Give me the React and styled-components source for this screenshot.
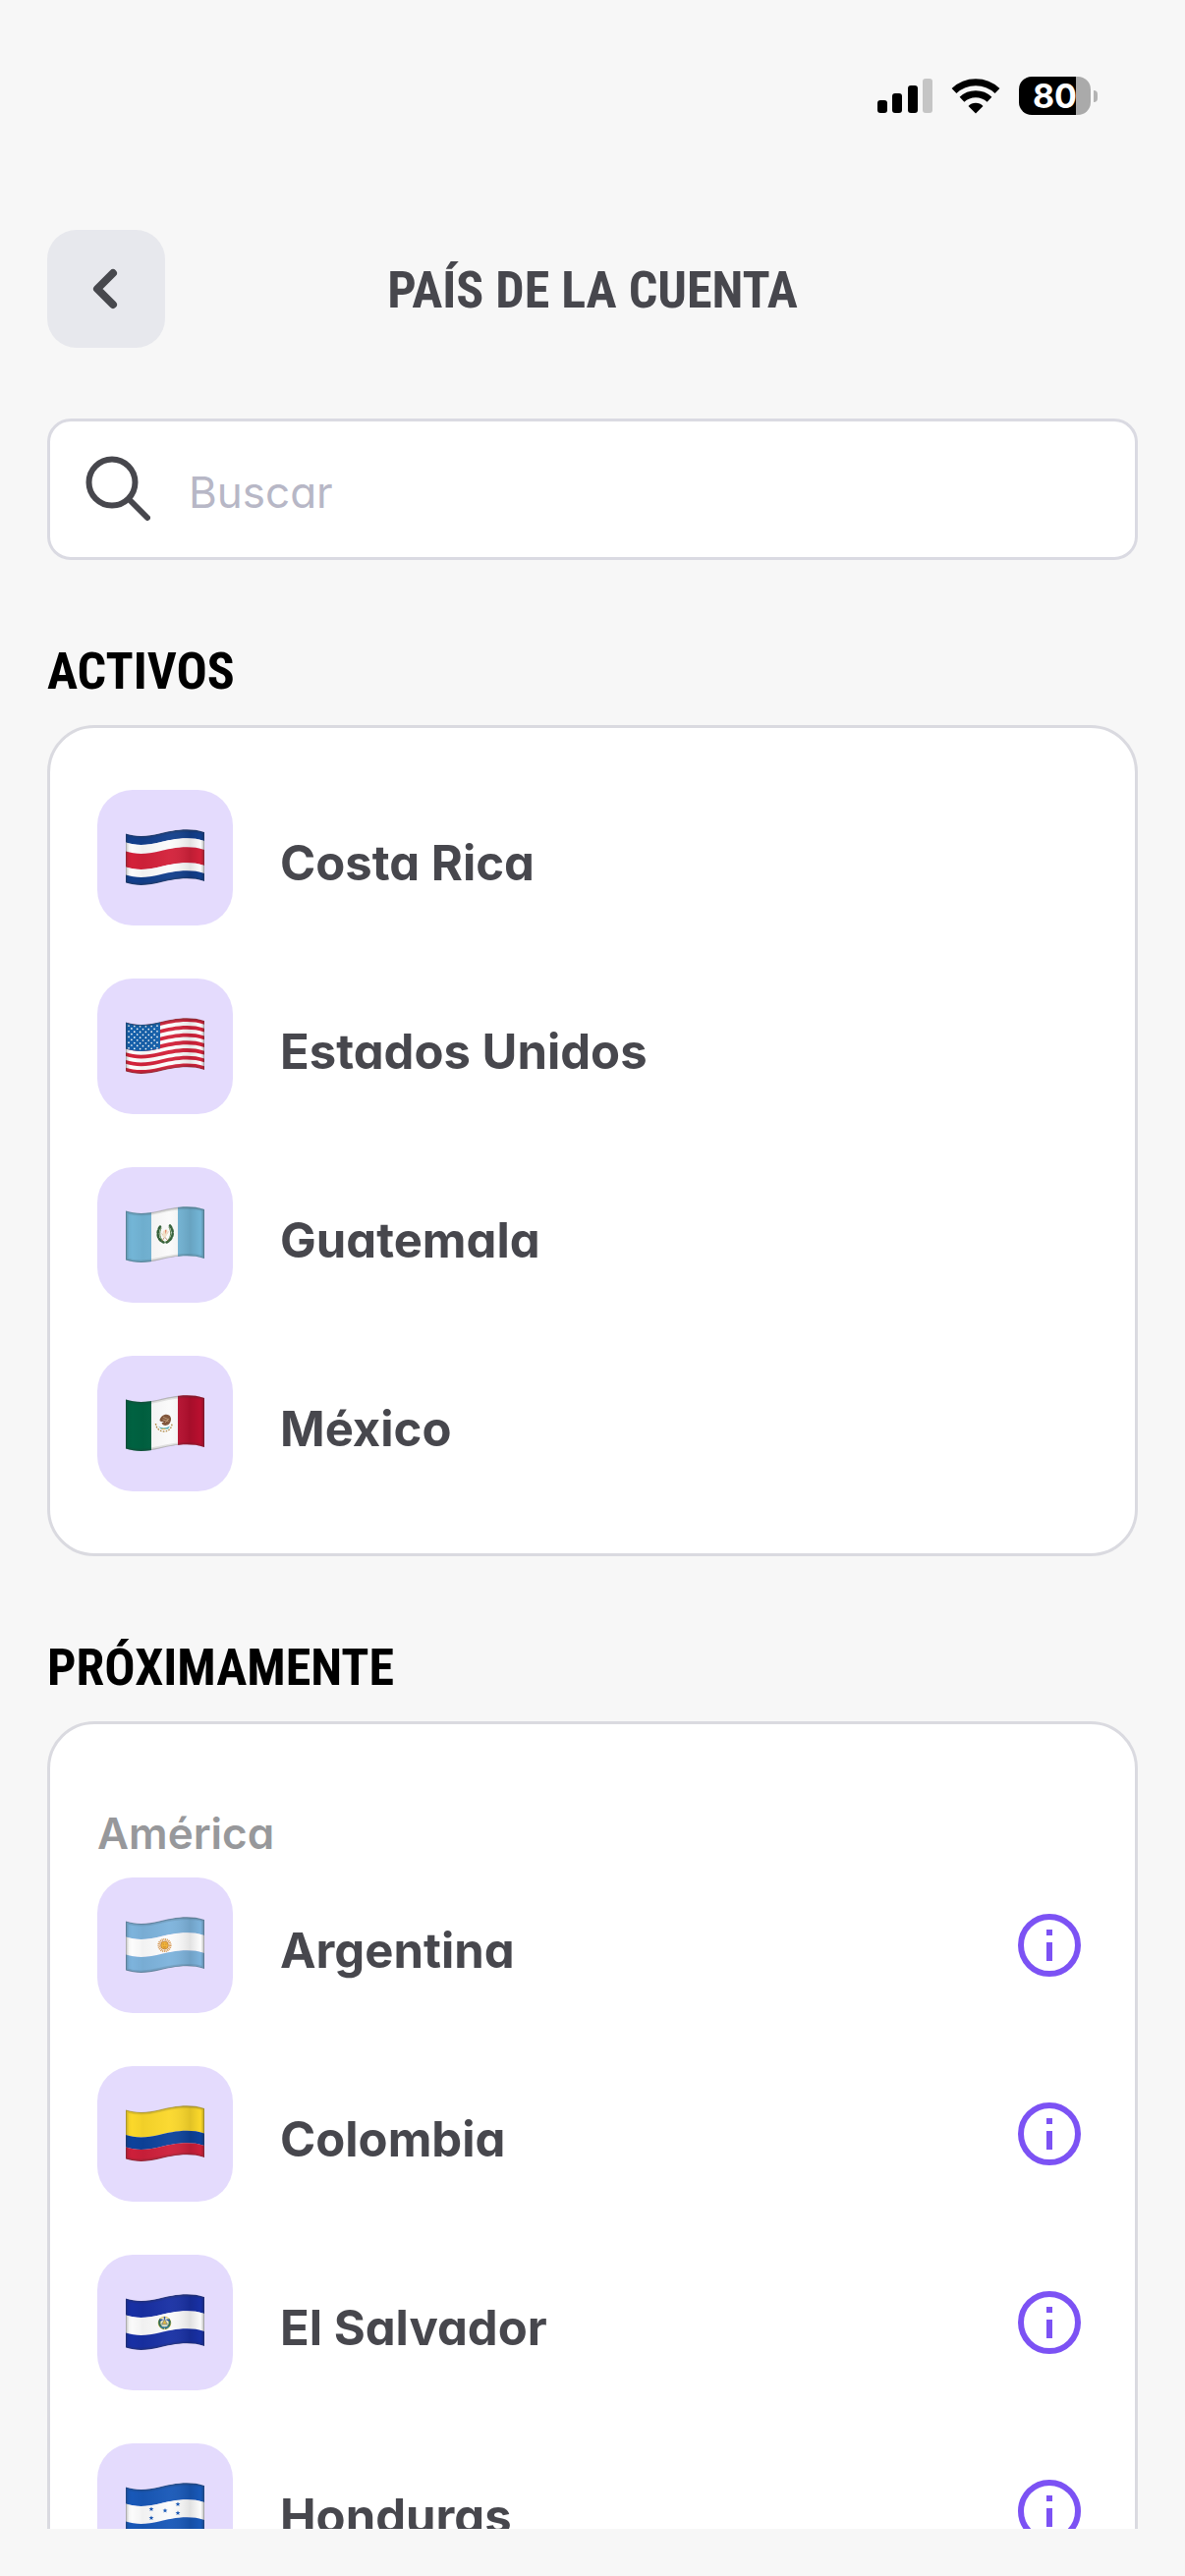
import React, { useId } from "react";
import styled, { createGlobalStyle } from "styled-components";

const GlobalStyle = createGlobalStyle`
  *, *::before, *::after { box-sizing: border-box; }
  body {
    margin: 0;
    background: #f7f7f7;
    color: #47474d;
    font-family: Inter, "Liberation Sans", sans-serif;
    font-feature-settings: "cv11" 1;
  }
  h1, h2, h3, ul { margin: 0; padding: 0; }
`;

const HEADING_FONT = `"Roboto Condensed", "Open Sans Condensed", "Noto Sans ExtraCondensed", "Noto Sans Condensed", Roboto, sans-serif`;

const Screen = styled.div`
  height: 100vh;
  display: flex;
  flex-direction: column;
  padding-bottom: 48px;
`;

const StatusBar = styled.div`
  display: flex;
  align-items: center;
  justify-content: flex-end;
  gap: 19px;
  padding: 78px 89px 0 48px;
`;

const BatteryWrap = styled.div`
  display: flex;
  align-items: center;
  gap: 3px;
`;

const Battery = styled.div`
  width: 73px;
  height: 39px;
  border-radius: 13px;
  background: linear-gradient(to right, #000 80%, #aaaaaa 80%);
  color: #fff;
  font-size: 34px;
  font-weight: 700;
  line-height: 39px;
  text-align: center;
`;

const BatteryTip = styled.div`
  width: 4px;
  height: 12px;
  border-radius: 0 6px 6px 0;
  background: #b4b4b4;
`;

const Header = styled.header`
  display: grid;
  grid-template-columns: 120px 1fr 120px;
  align-items: center;
  padding: 117px 48px 0;
`;

const BackButton = styled.button`
  display: flex;
  align-items: center;
  justify-content: center;
  width: 120px;
  height: 120px;
  padding: 0;
  border: 0;
  border-radius: 30px;
  background: #e7e8ed;
  color: #47484d;
`;

const Title = styled.h1`
  padding-top: 4px;
  font-family: ${HEADING_FONT};
  font-size: 52px;
  font-weight: 700;
  line-height: 60px;
  text-align: center;
`;

const SearchBox = styled.label`
  display: flex;
  align-items: center;
  gap: 39px;
  height: 144px;
  flex-shrink: 0;
  margin: 72px 48px 0;
  padding: 0 36px;
  border: 3px solid #dadae2;
  border-radius: 24px;
  background: #fff;
  color: #47474d;
`;

const SearchInput = styled.input`
  flex: 1;
  min-width: 0;
  padding: 6px 0 0;
  border: 0;
  outline: 0;
  background: transparent;
  color: inherit;
  font: inherit;
  font-feature-settings: inherit;
  font-size: 44px;
  line-height: 52px;
  &::placeholder { color: #b7b7c6; opacity: 1; }
`;

const Results = styled.main`
  flex: 1;
  min-height: 0;
  overflow-y: auto;
  padding: 0 48px;
  scrollbar-width: none;
`;

const SectionTitle = styled.h2`
  padding: 84px 0 24px;
  color: #000;
  font-family: ${HEADING_FONT};
  font-size: 52px;
  font-weight: 700;
  line-height: 60px;
`;

const Card = styled.div`
  padding: 63px 48px;
  border: 3px solid #dadae0;
  border-radius: 48px;
  background: #fff;
`;

const Region = styled.h3`
  padding: 22px 0 19px;
  color: #97989b;
  font-size: 44px;
  font-weight: 600;
  line-height: 52px;
`;

const CountryList = styled.ul`
  display: flex;
  flex-direction: column;
  gap: 54px;
  list-style: none;
`;

const CountryRow = styled.li`
  display: flex;
  align-items: center;
`;

const CountryButton = styled.button`
  flex: 1;
  display: flex;
  align-items: center;
  gap: 48px;
  padding: 0;
  border: 0;
  background: none;
  color: inherit;
  font: inherit;
  font-feature-settings: inherit;
  text-align: left;
`;

const Tile = styled.span`
  display: flex;
  align-items: center;
  justify-content: center;
  width: 138px;
  height: 138px;
  border-radius: 36px;
  background: #e4dbfd;
`;

const CountryName = styled.span`
  padding-top: 12px;
  font-size: 49px;
  font-weight: 700;
  line-height: 60px;
`;

const InfoButton = styled.button`
  display: flex;
  margin-right: 7px;
  padding: 0;
  border: 0;
  background: none;
  color: #7c52f4;
`;

/* The cloth of every flag follows one wave, 80 wide and 50 tall. */
const band = (top, bottom) =>
  `M0 ${4.5 + top}C10 ${8 + top} 22 ${7.5 + top} 34 ${4.5 + top}S64 ${-2.5 + top} 80 ${3 + top}` +
  `V${3 + bottom}C64 ${-2.5 + bottom} 46 ${1.5 + bottom} 34 ${4.5 + bottom}S10 ${8 + bottom} 0 ${4.5 + bottom}Z`;

const Stripes = ({ bands }) =>
  bands.map(([fill, top, bottom]) => <path key={top} d={band(top, bottom)} fill={fill} />);

const Columns = ({ left, right }) => (
  <>
    <path d={band(0, 50)} fill="#fafafa" />
    <rect x="0" y="0" width="26" height="60" fill={left} />
    <rect x="53" y="0" width="27" height="60" fill={right} />
  </>
);

const star = (cx, cy, r) =>
  Array.from({ length: 10 }, (_, i) => {
    const a = (Math.PI / 5) * i - Math.PI / 2;
    const d = i % 2 ? r * 0.42 : r;
    return `${cx + d * Math.cos(a)},${cy + d * Math.sin(a)}`;
  }).join(" ");

const flags = {
  cr: (
    <Stripes
      bands={[
        ["#123f8c", 0, 9],
        ["#fbfbfb", 9, 18],
        ["#d3213a", 18, 34],
        ["#fbfbfb", 34, 42],
        ["#123f8c", 42, 50],
      ]}
    />
  ),
  us: (
    <>
      <path d={band(0, 50)} fill="#fdfdfd" />
      {[0, 2, 4, 6, 8, 10, 12].map((i) => (
        <path key={i} d={band((i * 50) / 13, ((i + 1) * 50) / 13)} fill="#d3223a" />
      ))}
      <path d="M0 4.500C10 8 22 7.500 35 4.300V31.300C22 34.500 10 35 0 31.500Z" fill="#1560ab" />
      {Array.from({ length: 9 }, (_, r) =>
        Array.from({ length: r % 2 ? 5 : 6 }, (_, c) => (
          <circle
            key={`${r}-${c}`}
            cx={3 + c * 5.8 + (r % 2 ? 2.9 : 0)}
            cy={7.5 + r * 2.85 + Math.sin(((c + 1) * Math.PI) / 7) * 1.3}
            r="0.85"
            fill="#fff"
          />
        ))
      )}
    </>
  ),
  gt: (
    <>
      <Columns left="#73b5d6" right="#73b5d6" />
      <g fill="none" strokeLinecap="round">
        <path d="M35 20.500C31 26 32 34 38.500 36.500" stroke="#2f5d35" strokeWidth="2.600" strokeDasharray="2.400 2" />
        <path d="M45 19.500C49.500 25 48.500 33 41.500 36.500" stroke="#2f5d35" strokeWidth="2.600" strokeDasharray="2.400 2" />
        <path d="M36 22C33.500 27 34.500 33 39 36M44 21C47 26 46 33 41 36" stroke="#4f7a42" strokeWidth="1" />
        <path d="M37 35L43 26M43 35L37 28" stroke="#a97b50" strokeWidth="0.800" />
      </g>
      <path d="M38 25l4-2 1 4-3 5-3-2z" fill="#f2e2c9" />
      <path d="M40 23.500l1.500 1-1 4z" fill="#e3785b" />
    </>
  ),
  mx: (
    <>
      <Columns left="#006241" right="#b90f2f" />
      <path d="M34.500 26C35 21.500 40 18.500 44 20.500C47 22.500 46.500 27 44 29.500C41 32 37.500 31 36.500 28.500L39 27L36 27Z" fill="#7d5136" />
      <path d="M38 22.500l5 2M37.500 25l6 1.500M40 28l4-4" stroke="#c7a27e" strokeWidth="0.800" fill="none" />
      <path d="M33 31.500c3 2.500 8 2.500 12 0l-2 3h-7z" fill="#48a9b5" />
      <path d="M30.500 29c.5 5 4 8 8.500 8s7.500-3 8-7.500" stroke="#b08a45" strokeWidth="1.400" strokeDasharray="1.600 1.300" fill="none" />
      <path d="M36.500 34.500h4" stroke="#d4b04e" strokeWidth="1.200" />
    </>
  ),
  ar: (
    <>
      <Stripes bands={[["#7db3dc", 0, 16], ["#fcfcfc", 16, 34], ["#7db3dc", 34, 50]]} />
      <circle cx="39.500" cy="29" r="5.800" fill="none" stroke="#d99a55" strokeWidth="2.600" strokeDasharray="1 0.700" />
      <circle cx="39.500" cy="29" r="3.900" fill="#f2b233" stroke="#bd7a2c" strokeWidth="0.800" />
      <path d="M37.800 28h1M40.400 28h1M38.200 30.700q1.300.8 2.600 0" stroke="#a9651f" strokeWidth="0.700" fill="none" />
    </>
  ),
  co: (
    <Stripes bands={[["#fbd82a", 0, 25.5], ["#0d429b", 25.5, 38], ["#cd1f3a", 38, 50]]} />
  ),
  sv: (
    <>
      <Stripes bands={[["#1830a4", 0, 17], ["#fafafa", 17, 35], ["#1830a4", 35, 50]]} />
      <circle cx="39.500" cy="29.500" r="6.300" fill="#f3edc4" stroke="#d8bd4c" strokeWidth="0.900" />
      <path d="M35.500 25.500c-2.500 3-1.500 8 3.500 9.500M43.500 25.500c2.500 3 1.500 8-3.500 9.500" stroke="#2f6b4a" strokeWidth="2" fill="none" />
      <path d="M34.500 27l3-1M41.500 26l3 1M39.500 23v4" stroke="#2750a6" strokeWidth="1.400" />
      <path d="M39.500 25.500l3 5.500h-6z" fill="#e0b53e" stroke="#3c64a0" strokeWidth="0.600" />
      <path d="M35.500 33q4 2 8 0" stroke="#3b7da3" strokeWidth="1.400" fill="none" />
    </>
  ),
  hn: (
    <>
      <Stripes bands={[["#1858b8", 0, 17], ["#fbfbfb", 17, 35], ["#1858b8", 35, 50]]} />
      {[[26, 27], [26, 36], [40, 28.5], [53, 22], [53, 31]].map(([x, y]) => (
        <polygon key={`${x}-${y}`} points={star(x, y, 2.6)} fill="#1858b8" />
      ))}
    </>
  ),
};

function Flag({ code }) {
  const id = useId();
  return (
    <svg width="80" height="58" viewBox="0 0 80 58" aria-hidden="true">
      <defs>
        <clipPath id={`${id}c`}>
          <path d={band(0, 50)} />
        </clipPath>
        <linearGradient id={`${id}g`}>
          <stop offset="0" stopColor="#000" stopOpacity="0.060" />
          <stop offset="0.080" stopColor="#000" stopOpacity="0" />
          <stop offset="0.220" stopColor="#000" stopOpacity="0.040" />
          <stop offset="0.550" stopColor="#fff" stopOpacity="0.040" />
          <stop offset="0.820" stopColor="#000" stopOpacity="0.100" />
          <stop offset="0.950" stopColor="#000" stopOpacity="0" />
          <stop offset="1" stopColor="#000" stopOpacity="0.120" />
        </linearGradient>
      </defs>
      <g clipPath={`url(#${id}c)`}>
        {flags[code]}
        <path d={band(0, 50)} fill={`url(#${id}g)`} />
        <path d={band(0, 50)} fill="none" stroke="#333" strokeOpacity="0.120" strokeWidth="5" />
        <path d={band(0, 50)} fill="none" stroke="#333" strokeOpacity="0.250" strokeWidth="2" />
      </g>
    </svg>
  );
}

const SignalIcon = () => (
  <svg width="56" height="35" viewBox="0 0 56 35" aria-hidden="true">
    <rect x="0" y="22" width="10" height="13" rx="3" />
    <rect x="15" y="15" width="10" height="20" rx="3" />
    <rect x="31" y="7" width="10" height="28" rx="3" />
    <rect x="46" y="0" width="10" height="35" rx="3" fill="#c5c5c5" />
  </svg>
);

const WifiIcon = () => (
  <svg width="50" height="36" viewBox="0 0 50 36" aria-hidden="true">
    <g fill="none" stroke="#000" strokeWidth="7">
      <path d="M3 12.500a32 32 0 0 1 44 0" />
      <path d="M11 21.300a20.500 20.500 0 0 1 28 0" />
    </g>
    <path d="M25 35.500l-7.500-7.500a10.500 10.500 0 0 1 15 0z" />
  </svg>
);

const ChevronIcon = () => (
  <svg width="36" height="48" viewBox="0 0 36 48" aria-hidden="true">
    <path d="M25 8L9 24l16 16" fill="none" stroke="currentColor" strokeWidth="8" strokeLinecap="round" strokeLinejoin="round" />
  </svg>
);

const SearchIcon = () => (
  <svg width="66" height="72" viewBox="0 0 66 72" aria-hidden="true">
    <g fill="none" stroke="currentColor" strokeWidth="6" strokeLinecap="round">
      <circle cx="27" cy="29" r="23.500" />
      <path d="M44 46l19 19" />
    </g>
  </svg>
);

const InfoIcon = () => (
  <svg width="64" height="64" viewBox="0 0 64 64" aria-hidden="true">
    <circle cx="32" cy="32" r="29" fill="none" stroke="currentColor" strokeWidth="6" />
    <path d="M29 16h6v6h-6zM29 29h6v19h-6z" fill="currentColor" />
  </svg>
);

const active = [
  ["cr", "Costa Rica"],
  ["us", "Estados Unidos"],
  ["gt", "Guatemala"],
  ["mx", "México"],
];

const upcoming = [
  ["ar", "Argentina"],
  ["co", "Colombia"],
  ["sv", "El Salvador"],
  ["hn", "Honduras"],
];

const Countries = ({ items, withInfo }) => (
  <CountryList>
    {items.map(([code, name]) => (
      <CountryRow key={code}>
        <CountryButton type="button">
          <Tile>
            <Flag code={code} />
          </Tile>
          <CountryName>{name}</CountryName>
        </CountryButton>
        {withInfo && (
          <InfoButton type="button" aria-label={`Información: ${name}`}>
            <InfoIcon />
          </InfoButton>
        )}
      </CountryRow>
    ))}
  </CountryList>
);

export default function App() {
  return (
    <>
      <GlobalStyle />
      <Screen>
        <StatusBar>
          <SignalIcon />
          <WifiIcon />
          <BatteryWrap>
            <Battery>80</Battery>
            <BatteryTip />
          </BatteryWrap>
        </StatusBar>
        <Header>
          <BackButton type="button" aria-label="Volver">
            <ChevronIcon />
          </BackButton>
          <Title>PAÍS DE LA CUENTA</Title>
        </Header>
        <SearchBox>
          <SearchIcon />
          <SearchInput type="text" placeholder="Buscar" aria-label="Buscar" />
        </SearchBox>
        <Results>
          <SectionTitle>ACTIVOS</SectionTitle>
          <Card>
            <Countries items={active} />
          </Card>
          <SectionTitle>PRÓXIMAMENTE</SectionTitle>
          <Card>
            <Region>América</Region>
            <Countries items={upcoming} withInfo />
          </Card>
        </Results>
      </Screen>
    </>
  );
}
